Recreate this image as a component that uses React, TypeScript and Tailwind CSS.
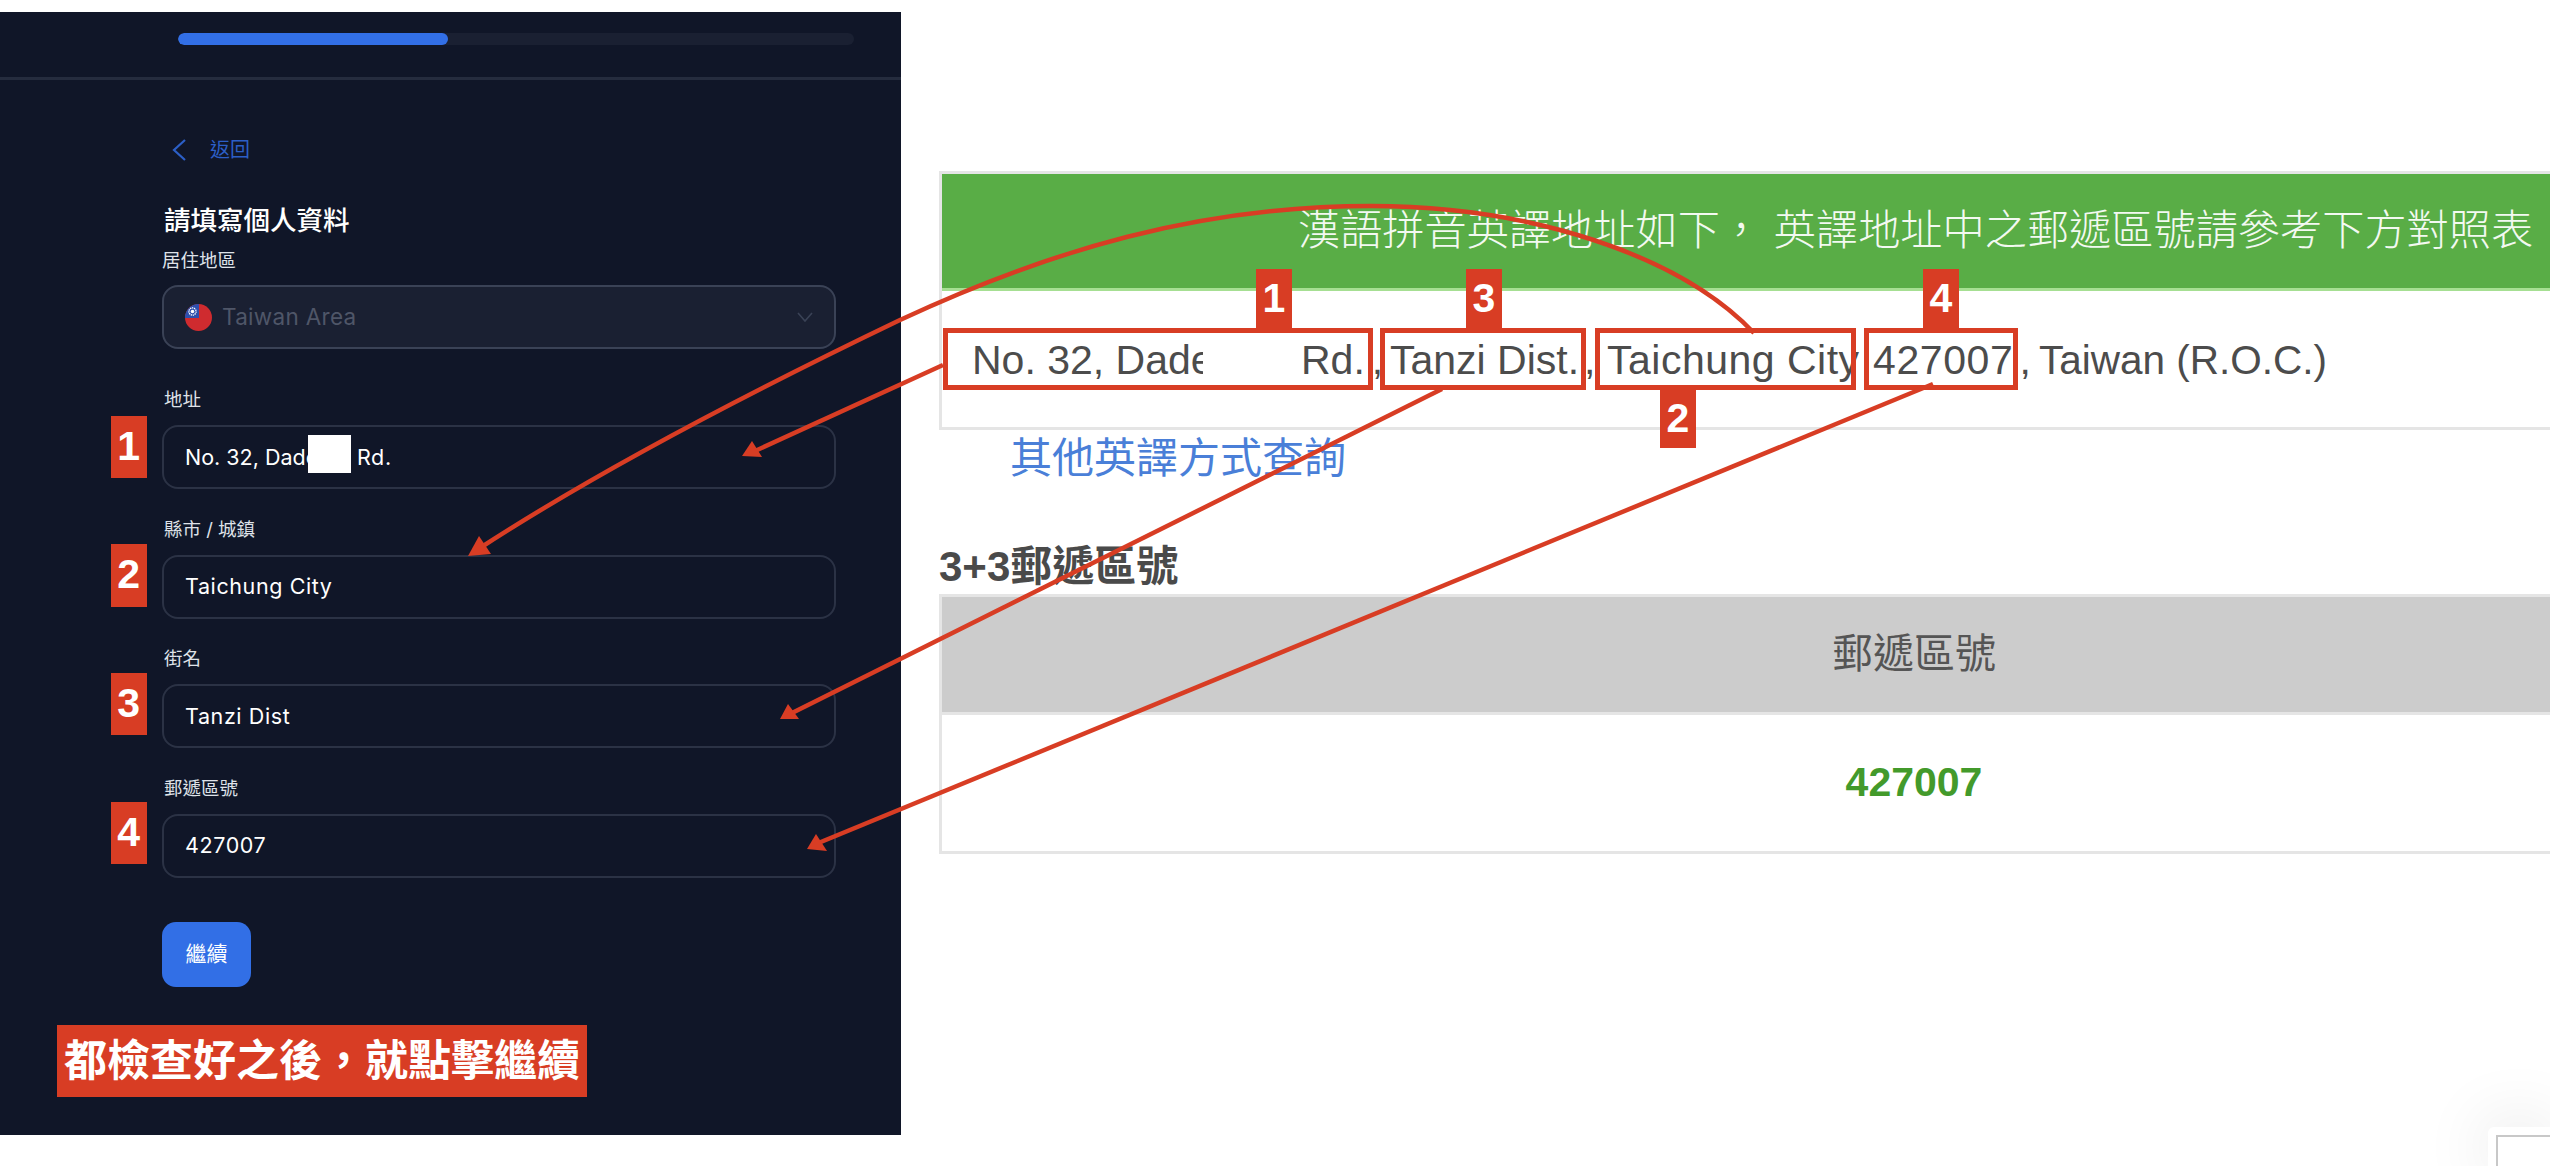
const panelFont = "font-['Inter','Noto_Sans_CJK_TC',sans-serif]";
const pageFont = "font-['Liberation_Sans','Noto_Sans_CJK_TC',sans-serif]";

function NumberTag({ n, className }: { n: number; className: string }) {
  return (
    <div
      className={`absolute flex w-9 items-center justify-center bg-[#d83d24] font-['Liberation_Sans',sans-serif] text-[41px] font-bold text-white ${className}`}
    >
      {n}
    </div>
  );
}

function Field({
  label,
  tag,
  tagClass,
  children,
}: {
  label: string;
  tag: number;
  tagClass: string;
  children: React.ReactNode;
}) {
  return (
    <div>
      <div className="mb-[14px] h-6 pl-0.5 text-[18.5px] leading-6 text-[#dfe2e8]">{label}</div>
      <div className="relative flex h-16 items-center rounded-[16px] border-2 border-[#2b3245] pl-[21px] text-[21.5px] tracking-[0.6px] text-white">
        <NumberTag n={tag} className={tagClass} />
        {children}
      </div>
    </div>
  );
}

function TaiwanFlag() {
  return (
    <svg width="27" height="27" viewBox="0 0 27 27">
      <circle cx="13.5" cy="13.5" r="13.5" fill="#cf2b2f" />
      <path d="M13.5 0A13.5 13.5 0 0 0 0 13.5V14H14V0Z" fill="#2e50ad" />
      <circle cx="7.5" cy="7.5" r="3.6" fill="none" stroke="#fff" strokeWidth="1.3" strokeDasharray="1.3 0.7" />
      <circle cx="7.5" cy="7.5" r="1.8" fill="#fff" />
    </svg>
  );
}

function FormPanel() {
  return (
    <div className={`flex h-[1123px] w-[901px] shrink-0 flex-col bg-[#101628] ${panelFont}`}>
      <div className="h-[68px] border-b-[3px] border-[#252c3e] pl-[178px] pr-[47px] pt-[21px]">
        <div className="h-3 overflow-hidden rounded-full bg-[#1a2032]">
          <div className="h-full w-[270px] rounded-full bg-[#326fe6]" />
        </div>
      </div>

      <div className="flex w-[836px] flex-col pl-[162px]">
        <div className="mt-[59px] flex h-[22px] items-center pl-2.5 text-[20px] text-[#2c5fc7]">
          <svg width="14" height="22" viewBox="0 0 14 22" fill="none" stroke="#2c5fc7" strokeWidth="2.2">
            <path d="M13 1 2 11l11 10" />
          </svg>
          <span className="ml-6 leading-none">返回</span>
        </div>

        <h1 className="mt-[43px] h-8 pl-0.5 text-[26.5px] font-medium leading-8 text-white">請填寫個人資料</h1>

        <div className="mt-3 mb-[13px] h-6 text-[18.5px] leading-6 text-[#dfe2e8]">居住地區</div>
        <div className="flex h-16 items-center rounded-[16px] border-2 border-[#3a4256] bg-[#1a2032] pl-[21px] pr-[21px] text-[22.5px] tracking-[0.3px] text-[#4f5668]">
          <TaiwanFlag />
          <span className="ml-[10px]">Taiwan Area</span>
          <svg className="ml-auto" width="16" height="10" viewBox="0 0 16 10" fill="none" stroke="#3a4256" strokeWidth="1.6">
            <path d="M1 1l7 8 7-8" />
          </svg>
        </div>

        <div className="mt-[38px] flex flex-col gap-[27.5px]">
          <Field label="地址" tag={1} tagClass="-left-[53px] -top-[11px] h-[62px]">
            <span className="w-[172px] overflow-hidden whitespace-nowrap tracking-normal">No. 32, Dade</span>
            <span>Rd.</span>
            <div className="absolute left-[144px] top-2 h-[38px] w-[43px] bg-white" />
          </Field>
          <Field label="縣市 / 城鎮" tag={2} tagClass="-left-[53px] -top-[13px] h-[63px]">
            Taichung City
          </Field>
          <Field label="街名" tag={3} tagClass="-left-[53px] -top-[13px] h-[62px]">
            Tanzi Dist
          </Field>
          <Field label="郵遞區號" tag={4} tagClass="-left-[53px] -top-[14px] h-[62px]">
            427007
          </Field>
        </div>

        <button className="mt-[44px] h-[65px] w-[89px] rounded-[14px] bg-[#326fe6] text-[21px] text-white">繼續</button>

        <div className="-ml-[105px] mt-[38px] flex h-[72px] w-[530px] items-center justify-center bg-[#d83d24] text-[43px] font-bold text-white">
          都檢查好之後，就點擊繼續
        </div>
      </div>
    </div>
  );
}

function AddressPart({
  width,
  boxLeft,
  boxWidth,
  children,
}: {
  width: string;
  boxLeft: string;
  boxWidth: string;
  children: React.ReactNode;
}) {
  return (
    <div className={`relative flex h-[62px] shrink-0 items-center whitespace-nowrap pt-[3px] ${width}`}>
      {children}
      <div className={`absolute inset-y-0 border-[5px] border-[#d83d24] ${boxLeft} ${boxWidth}`} />
    </div>
  );
}

function LookupPanel() {
  return (
    <div className={`min-w-0 flex-1 overflow-hidden pl-[38px] pt-[159px] ${pageFont}`}>
      <div className="w-[1950px] border-[3px] border-[#e5e5e5]">
        <div className="flex h-[117px] items-center border-b-[3px] border-[#a6df92] bg-[#59ad46] pl-[356px] text-[42.2px] font-light leading-none text-[#f3f9f1]">
          漢語拼音英譯地址如下， 英譯地址中之郵遞區號請參考下方對照表
        </div>
        <div className="flex h-[136px] items-center pl-[30px] text-[41px] text-[#4c4c4c]">
          <AddressPart width="w-[418px]" boxLeft="-left-[29px]" boxWidth="w-[430px]">
            <span className="w-[329px] overflow-hidden">No. 32, Dade</span>
            <span>Rd.</span>
            <span className="ml-[7px]">,</span>
            <div className="absolute left-[231px] top-[18px] h-[35px] w-[97px] bg-white" />
            <NumberTag n={1} className="bottom-full left-[284px] h-[59px]" />
          </AddressPart>
          <AddressPart width="w-[217px]" boxLeft="-left-[10px]" boxWidth="w-[206px]">
            Tanzi Dist.
            <span className="ml-[5px]">,</span>
            <NumberTag n={3} className="bottom-full left-[76px] h-[59px]" />
          </AddressPart>
          <AddressPart width="w-[266px]" boxLeft="-left-[12px]" boxWidth="w-[261px]">
            <span className="tracking-[0.5px]">Taichung City</span>
            <NumberTag n={2} className="left-[53px] top-full h-[58px]" />
          </AddressPart>
          <AddressPart width="w-[166px]" boxLeft="-left-[9px]" boxWidth="w-[154px]">
            <span className="tracking-[0.6px]">427007</span>
            <span className="ml-[6px]">,</span>
            <NumberTag n={4} className="bottom-full left-[50px] h-[59px]" />
          </AddressPart>
          <span className="pt-[3px] text-[40.5px]">Taiwan (R.O.C.)</span>
        </div>
      </div>

      <a className="ml-[71px] mt-[4px] block h-[50px] text-[42px] leading-[50px] text-[#4a7fd8]">其他英譯方式查詢</a>

      <h2 className="mt-[58px] h-[50px] text-[42px] font-bold leading-[50px] text-[#4a4a4a]">3+3郵遞區號</h2>

      <div className="mt-[2px] w-[1950px] border-[3px] border-[#e5e5e5] text-center">
        <div className="flex h-[118px] items-center justify-center border-b-[3px] border-[#e5e5e5] bg-[#cccccc] text-[41px] text-[#555555]">
          郵遞區號
        </div>
        <div className="flex h-[136px] items-center justify-center text-[41px] font-bold text-[#439a2b]">427007</div>
      </div>
    </div>
  );
}

function Arrows() {
  const red = "#d83d24";
  return (
    <svg className="pointer-events-none absolute left-0 top-0" width="2550" height="1166" fill="none" stroke={red} strokeWidth="4.5">
      <path d="M943 365 755 451" />
      <path d="M1442 389 790 714" />
      <path d="M1933 384 816 844" />
      <path d="M1754 333C1680 255 1530 206 1371 206 1200 206 1050 250 900 320 750 392 600 470 480 548" />
      <g fill={red} stroke="none">
        <path d="M742 456 752 441 762 457Z" />
        <path d="M780 719 788 704 799 719Z" />
        <path d="M807 849 816 834 827 851Z" />
        <path d="M468 556 479 536 491 554Z" />
      </g>
    </svg>
  );
}

export default function App() {
  return (
    <div className="relative flex h-[1166px] w-[2550px] overflow-hidden bg-white pt-3">
      <FormPanel />
      <LookupPanel />
      <Arrows />
      {/* corner of the floating badge, cut off by the screenshot */}
      <div className="absolute bottom-0 right-0 h-[39px] w-[62px] rounded-tl-[6px] bg-white pl-[8px] pt-[8px] shadow-[0_0_70px_rgba(0,0,0,0.14)]">
        <div className="h-full w-full border-l-2 border-t-2 border-[#c8c8c8]" />
      </div>
    </div>
  );
}
